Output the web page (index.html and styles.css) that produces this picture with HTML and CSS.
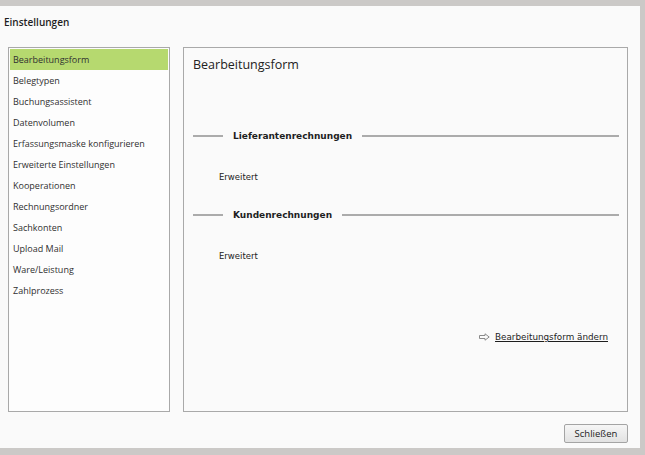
FILE: index.html
```html
<!DOCTYPE html>
<html lang="de">
<head>
  <meta charset="UTF-8" />
  <title>Einstellungen</title>
  <link rel="stylesheet" href="styles.css">
</head>
<body>
  <div class="dialog">
    <div class="dialog-title">Einstellungen</div>

    <div class="dialog-body">
      <ul class="nav-list">
        <li class="active">Bearbeitungsform</li>
        <li>Belegtypen</li>
        <li>Buchungsassistent</li>
        <li>Datenvolumen</li>
        <li>Erfassungsmaske konfigurieren</li>
        <li>Erweiterte Einstellungen</li>
        <li>Kooperationen</li>
        <li>Rechnungsordner</li>
        <li>Sachkonten</li>
        <li>Upload Mail</li>
        <li>Ware/Leistung</li>
        <li>Zahlprozess</li>
      </ul>

      <div class="panel">
        <h2 class="panel-title">Bearbeitungsform</h2>

        <div class="group-head first">
          <span class="line short"></span>
          <span class="group-label">Lieferantenrechnungen</span>
          <span class="line"></span>
        </div>
        <div class="group-value">Erweitert</div>

        <div class="group-head">
          <span class="line short"></span>
          <span class="group-label">Kundenrechnungen</span>
          <span class="line"></span>
        </div>
        <div class="group-value">Erweitert</div>

        <div class="panel-action">
          <svg class="arrow" width="11" height="8" viewBox="0 0 11 8">
            <path d="M0.5 2.5 H6 V0.8 L10.2 4 L6 7.2 V5.5 H0.5 Z" fill="none" stroke="#8a8a8a" stroke-width="1"/>
          </svg>
          <a href="#" class="action-link">Bearbeitungsform ändern</a>
        </div>
      </div>
    </div>

    <div class="dialog-footer">
      <button class="btn">Schließen</button>
    </div>
  </div>
</body>
</html>
```

FILE: styles.css
```css
body {
  margin: 0;
  background-color: #cbc9c7;
  font-family: "Open Sans", "Noto Sans", sans-serif;
  color: #2b2b2b;
}

.dialog {
  margin-top: 6px;
  width: 640px;
  height: 442px;
  background-color: #fafafa;
  display: flex;
  flex-direction: column;
}

.dialog-title {
  height: 41px;
  padding: 9px 0 0 4px;
  box-sizing: border-box;
  font-size: 10px;
  font-weight: 600;
  color: #1e1e1e;
}

.dialog-body {
  display: flex;
  gap: 13px;
  padding-left: 8px;
  height: 365px;
}

.nav-list {
  list-style: none;
  margin: 0;
  padding: 1px;
  width: 158px;
  border: 1px solid #a9a9a9;
  background-color: #fdfdfd;
}

.nav-list li {
  height: 21px;
  line-height: 21px;
  padding-left: 3px;
  font-size: 9px;
  color: #303030;
}

.nav-list li.active {
  background-color: #b6d96f;
}

.panel {
  flex: 1;
  margin-right: 12px;
  border: 1px solid #a9a9a9;
  background-color: #fafafa;
  padding: 0 8px 0 9px;
  display: flex;
  flex-direction: column;
}

.panel-title {
  margin: 8px 0 0 0;
  font-size: 12.5px;
  font-weight: normal;
  color: #222;
}

.group-head {
  display: flex;
  align-items: center;
  gap: 10px;
  margin-top: 28px;
}

.group-head.first {
  margin-top: 58px;
}

.line {
  flex: 1;
  height: 2px;
  background-color: #ababab;
}

.line.short {
  flex: 0 0 30px;
}

.group-label {
  font-family: "DejaVu Sans", Verdana, sans-serif;
  font-size: 9px;
  font-weight: bold;
  color: #1e1e1e;
}

.group-value {
  margin: 31px 0 0 26px;
  font-family: "DejaVu Sans", Verdana, sans-serif;
  font-size: 8.5px;
  color: #222;
}

.panel-action {
  margin-top: 71px;
  margin-right: 11px;
  display: flex;
  justify-content: flex-end;
  align-items: center;
  gap: 5px;
}

.action-link {
  font-family: "DejaVu Sans", Verdana, sans-serif;
  font-size: 8.8px;
  color: #1e1e1e;
}

.dialog-footer {
  display: flex;
  justify-content: flex-end;
  padding: 12px 12px 0 0;
}

.btn {
  width: 64px;
  height: 19px;
  padding: 0;
  font-family: "Open Sans", "Noto Sans", sans-serif;
  font-size: 9.5px;
  color: #222;
  border: 1px solid #a4a4a4;
  border-radius: 2px;
  background: linear-gradient(#f6f6f6, #e2e2e2);
}
```
